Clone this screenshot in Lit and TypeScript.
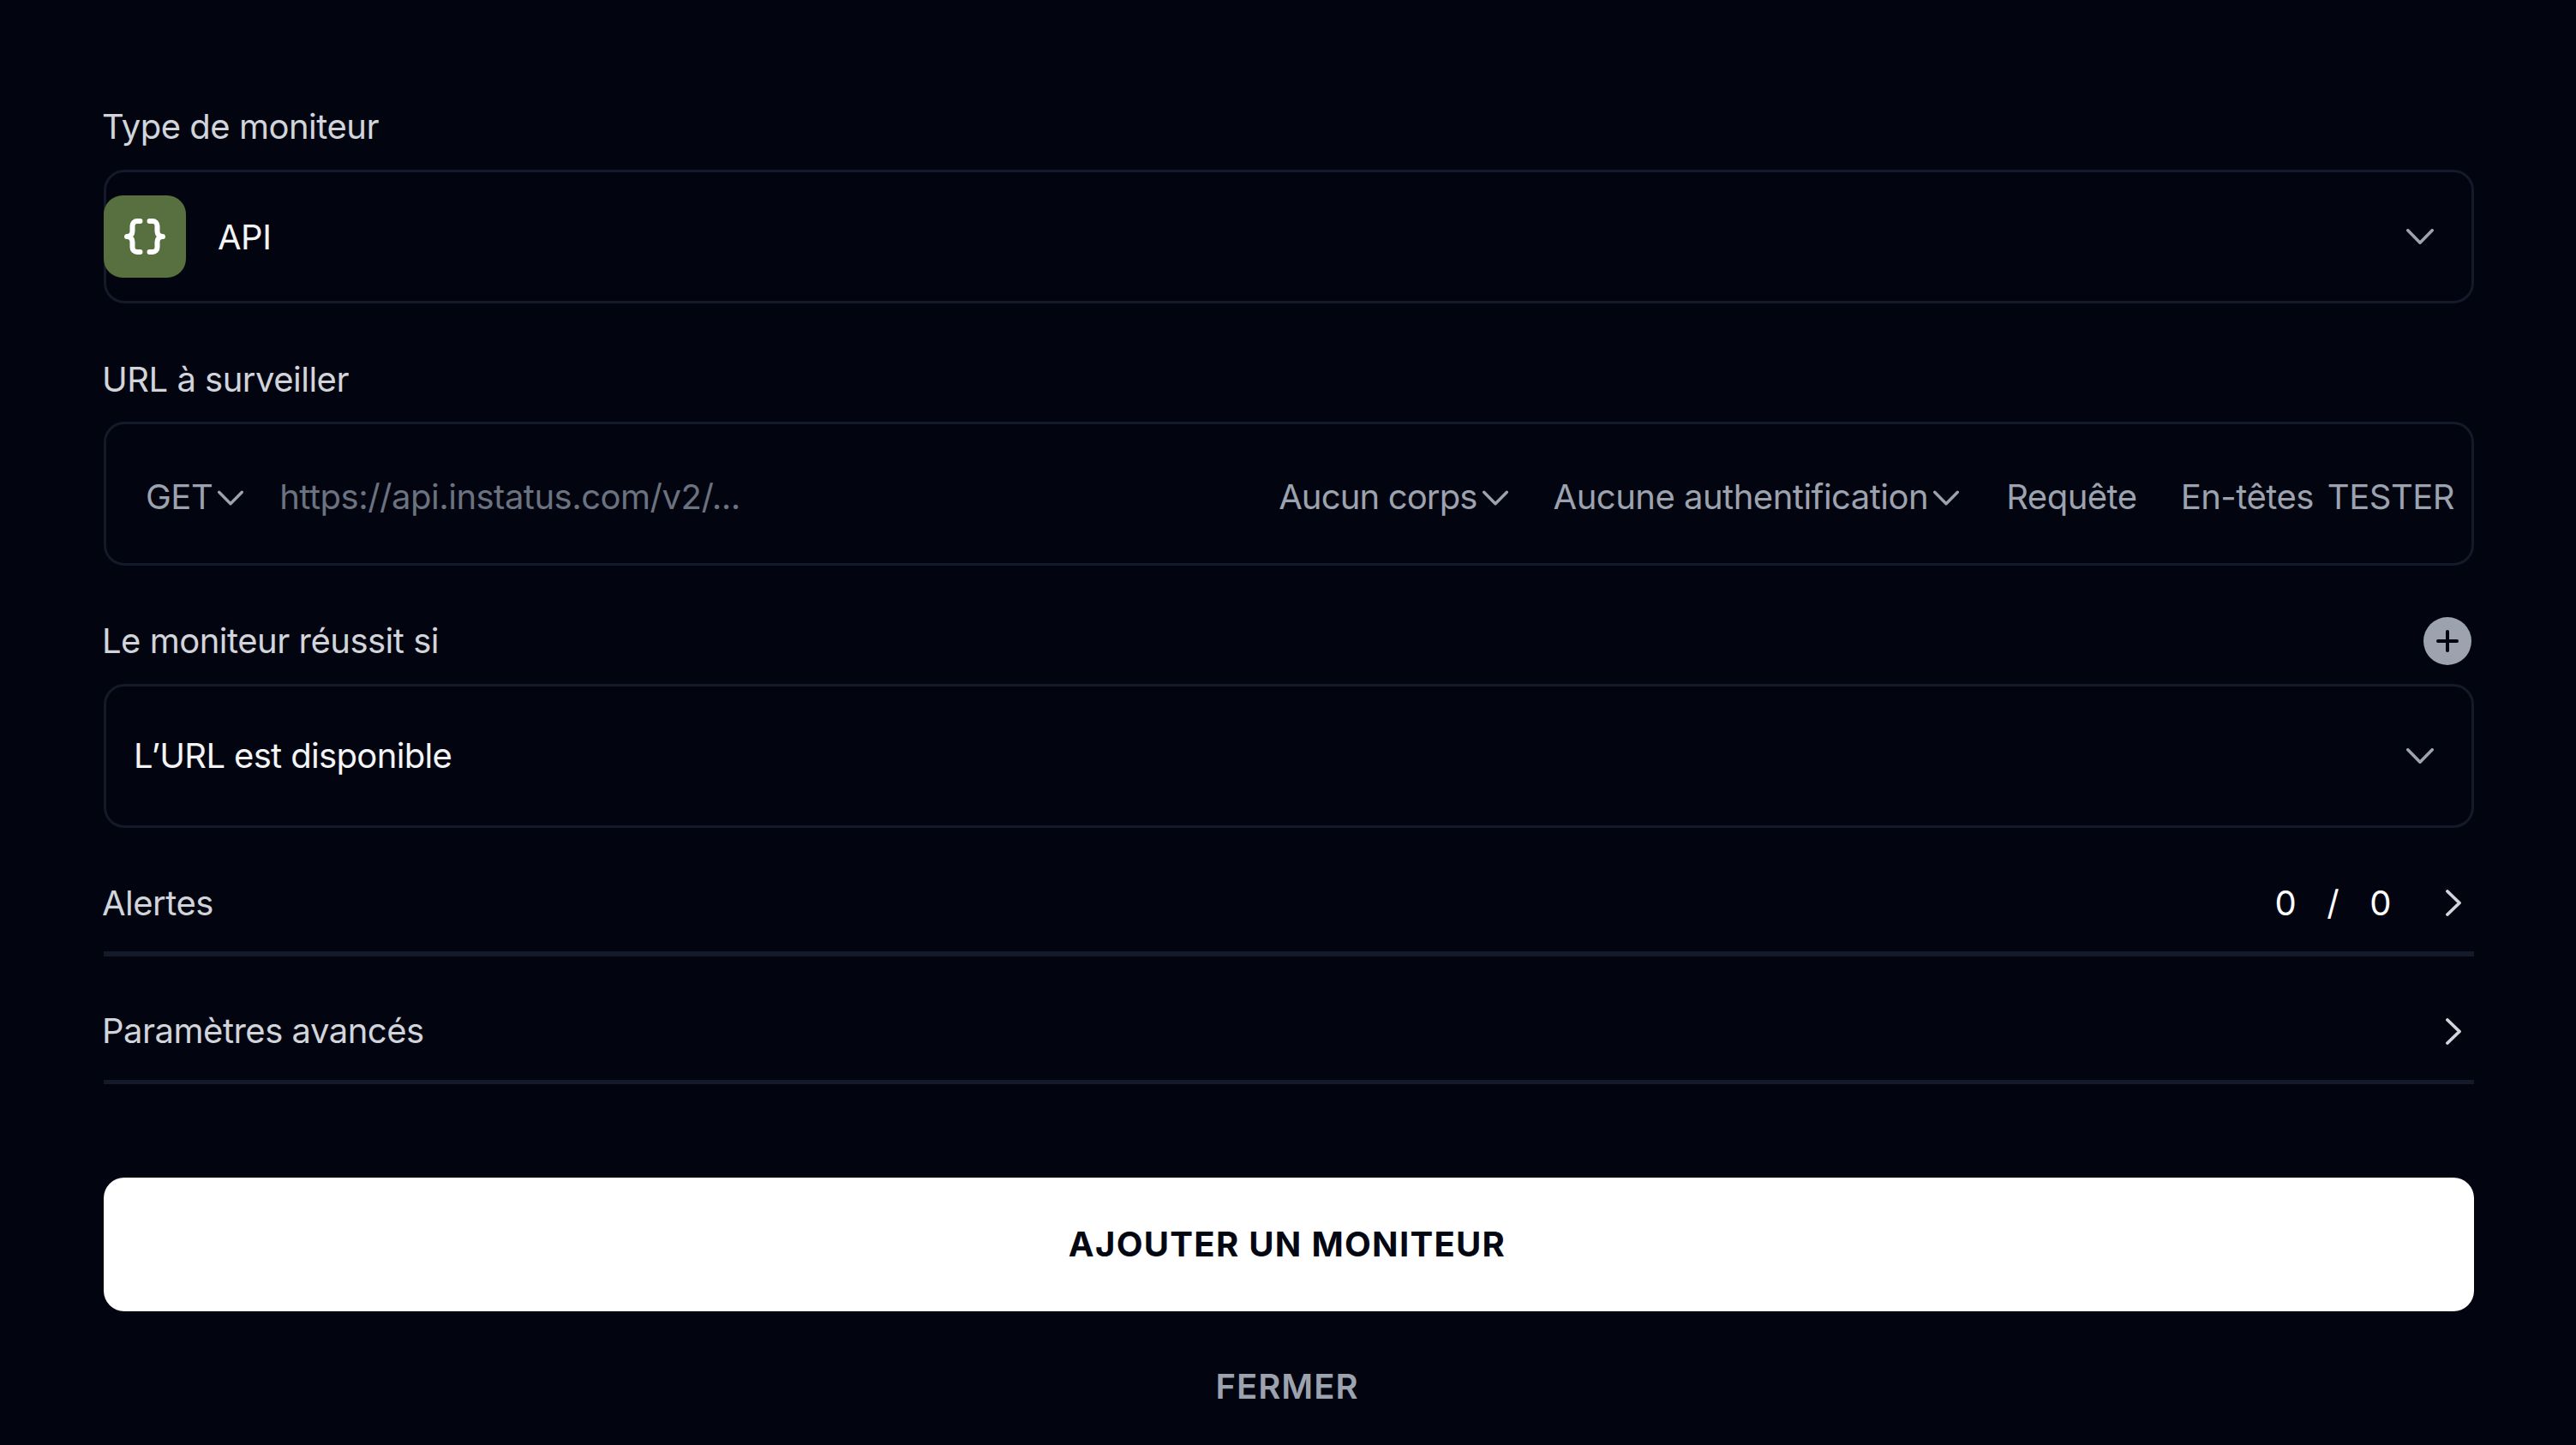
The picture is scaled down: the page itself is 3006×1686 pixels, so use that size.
import { LitElement, html, css } from "lit";
import { customElement } from "lit/decorators.js";

const chevD = html`<svg class="chev" viewBox="0 0 32 18" fill="none" stroke="currentColor" stroke-width="3.6" stroke-linecap="round" stroke-linejoin="round"><path d="M1.800 1.800 16 16.200 30.200 1.800"/></svg>`;
const chevS = html`<svg class="chevs" viewBox="0 0 32 18" fill="none" stroke="currentColor" stroke-width="3.600" stroke-linecap="round" stroke-linejoin="round"><path d="M1.800 1.800 16 16.200 30.200 1.800"/></svg>`;
const chevR = html`<svg class="chevr" viewBox="0 0 18 31" fill="none" stroke="currentColor" stroke-width="3.800" stroke-linecap="round" stroke-linejoin="round"><path d="M2 2 16 15.500 2 29"/></svg>`;

@customElement("app-root")
export class AppRoot extends LitElement {
  static styles = css`
    :host { display: block; width: 3006px; height: 1686px; background: #02040f; color: #d1d5db; font-family: Inter, "Liberation Sans", sans-serif; font-size: 40px; line-height: 48px; letter-spacing: -0.5px; box-sizing: border-box; padding: 124px 119px 0 121px; overflow: hidden; }
    * { box-sizing: border-box; }
    .label { height: 48px; margin-left: -2px; color: #d1d5db; }
    .box { border: 3px solid #141a2a; border-radius: 24px; display: flex; align-items: center; margin-top: 26px; }
    .type { height: 156px; padding-right: 44px; }
    .logo { width: 96px; height: 96px; border-radius: 22px; background: #58703f; margin-left: -3px; color: #fff; flex: none; }
    .logo svg { width: 96px; height: 96px; display: block; }
    .api { margin-left: 37px; padding-top: 1px; color: #f3f4f6; flex: 1; }
    .chev { width: 32px; height: 18px; color: #9ca3af; display: block; flex: none; }
    .chevs { width: 30px; height: 18px; color: #9ca3af; display: block; flex: none; margin-top: 3px; }
    .chevr { width: 18px; height: 31px; color: #d1d5db; display: block; flex: none; }
    .sec { margin-top: 65px; }
    .sec2 { margin-top: 64px; margin-left: -2px; }
    .url { height: 168px; margin-top: 25px; padding: 7px 20px 0 46px; color: #9ca3af; }
    .drop { display: flex; align-items: center; gap: 6px; }
    .corps { letter-spacing: -0.85px; }
    .ph { margin-left: 42px; flex: 1; color: #6b7280; }
    .gap-a { margin-left: 53px; }
    .gap-b { margin-left: 55px; }
    .gap-c { margin-left: 51px; }
    .tester { margin-left: 16px; }
    .row { display: flex; align-items: center; justify-content: space-between; }
    .plus { width: 56px; height: 56px; border-radius: 50%; background: #9ca3af; display: flex; align-items: center; justify-content: center; margin-right: 3px; flex: none; }
    .plus svg { width: 26px; height: 26px; display: block; }
    .cond { height: 168px; margin-top: 26px; padding: 0 44px 0 32px; justify-content: space-between; color: #f3f4f6; }
    .cond span { letter-spacing: -0.65px; }
    .line { height: 149px; border-bottom: 5px solid #141a2a; padding-top: 30px; }
    .line.first { height: 150px; border-bottom-width: 6px; padding-top: 31px; }
    .line .label { height: auto; }
    .count { display: flex; align-items: center; color: #fff; }
    .count span { margin-right: 36px; }
    .count span.last { margin-right: 0; }
    .count .chevr { margin-left: 64px; margin-right: 15px; }
    .btn { margin-top: 109px; height: 156px; border-radius: 24px; background: #fff; color: #030712; display: flex; align-items: center; justify-content: center; font-weight: 650; letter-spacing: 1.3px; padding-right: 4px; }
    .close { margin-top: 64px; text-align: center; font-weight: 600; color: #9ca3af; letter-spacing: 1px; padding-right: 4px; }
  `;
  render() {
    return html`
      <div class="label">Type de moniteur</div>
      <div class="box type">
        <div class="logo"><svg viewBox="0 0 96 96" fill="none" stroke="currentColor" stroke-width="6" stroke-linecap="round" stroke-linejoin="round"><path d="M42.500 30H39a5.500 5.500 0 0 0-5.500 5.500V42a6 6 0 0 1-6.500 6 6 6 0 0 1 6.500 6v6.500A5.500 5.500 0 0 0 39 66h3.500"/><path d="M53.500 30H57a5.500 5.500 0 0 1 5.500 5.500V42a6 6 0 0 0 6.500 6 6 6 0 0 0-6.500 6v6.500A5.500 5.500 0 0 1 57 66h-3.500"/></svg></div>
        <div class="api">API</div>
        ${chevD}
      </div>
      <div class="label sec">URL à surveiller</div>
      <div class="box url">
        <div class="drop">GET ${chevS}</div>
        <div class="ph">https://api.instatus.com/v2/...</div>
        <div class="drop corps">Aucun corps ${chevS}</div>
        <div class="drop gap-a">Aucune authentification ${chevS}</div>
        <div class="gap-b">Requête</div>
        <div class="gap-c">En-têtes</div>
        <div class="tester">TESTER</div>
      </div>
      <div class="row sec2 label"><span>Le moniteur réussit si</span>
        <div class="plus"><svg viewBox="0 0 26 26" fill="none" stroke="#02040f" stroke-width="4" stroke-linecap="round"><path d="M13 2v22M2 13h22"/></svg></div>
      </div>
      <div class="box cond"><span>L’URL est disponible</span>${chevD}</div>
      <div class="row line first"><span class="label">Alertes</span><div class="count"><span>0</span><span>/</span><span class="last">0</span>${chevR}</div></div>
      <div class="row line"><span class="label">Paramètres avancés</span><div class="count">${chevR}</div></div>
      <div class="btn">AJOUTER UN MONITEUR</div>
      <div class="close">FERMER</div>
    `;
  }
}
